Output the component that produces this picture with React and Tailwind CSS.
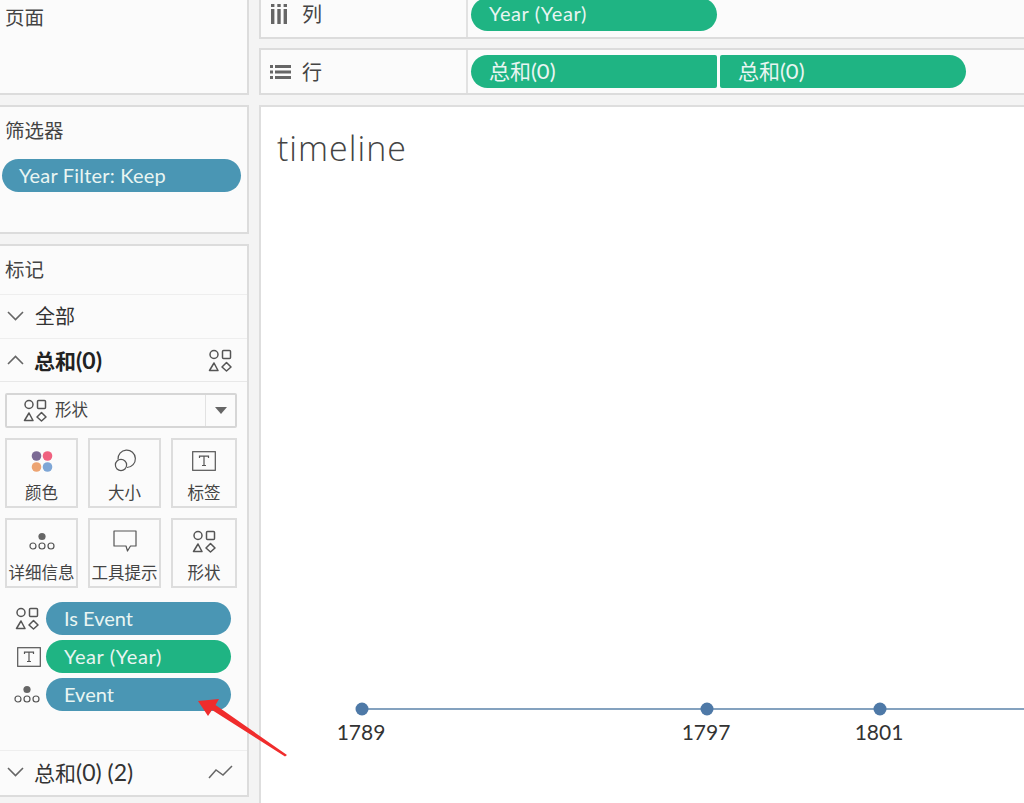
const font = { cjk: "font-['Lato','Noto_Sans_CJK_SC',sans-serif]" }

function ShapesIcon({ className = 'w-[24px] h-[23px]' }) {
  return (
    <svg className={className} viewBox="0 0 24 23" fill="none" stroke="#555" strokeWidth="1.5">
      <circle cx="6" cy="5.5" r="4" />
      <rect x="14.5" y="1.5" width="8" height="8" rx="1" />
      <path d="M6 14 L10 21.5 H1.5 Z" strokeLinejoin="round" />
      <path d="M18.5 13.5 L23 18 L18.5 22 L14 18 Z" strokeLinejoin="round" />
    </svg>
  )
}

function LabelIcon({ className = 'w-[24px] h-[20px]' }) {
  return (
    <svg className={className} viewBox="0 0 24 20" fill="none">
      <rect x="0.7" y="0.7" width="22.6" height="18.6" stroke="#555" strokeWidth="1.2" />
      <path d="M7.5 7 V5.2 H16.5 V7 M12 5.2 V14.5 M10 14.5 H14" stroke="#555" strokeWidth="1.2" />
    </svg>
  )
}

function DetailIcon({ className = 'w-[26px] h-[19px]' }) {
  return (
    <svg className={className} viewBox="0 0 26 19" fill="none">
      <circle cx="13" cy="4.5" r="3.6" fill="#666" />
      <circle cx="4" cy="14" r="3" stroke="#555" strokeWidth="1.2" />
      <circle cx="13" cy="14" r="3" stroke="#555" strokeWidth="1.2" />
      <circle cx="22" cy="14" r="3" stroke="#555" strokeWidth="1.2" />
    </svg>
  )
}

function ColorIcon() {
  return (
    <svg className="w-[22px] h-[21px]" viewBox="0 0 22 21">
      <circle cx="5.5" cy="5" r="4.8" fill="#7b6a94" />
      <circle cx="16.5" cy="5" r="4.8" fill="#f0617f" />
      <circle cx="5.5" cy="16" r="4.8" fill="#eda472" />
      <circle cx="16.5" cy="16" r="4.8" fill="#7ea6d6" />
    </svg>
  )
}

function SizeIcon() {
  return (
    <svg className="w-[24px] h-[24px]" viewBox="0 0 24 24" fill="none" stroke="#555" strokeWidth="1.2">
      <path d="M5 10.5 A8.7 8.7 0 1 1 14 18.5" />
      <circle cx="8" cy="16" r="5.6" />
    </svg>
  )
}

function TooltipIcon() {
  return (
    <svg className="w-[24px] h-[23px]" viewBox="0 0 24 23" fill="none">
      <path d="M1 1 H23 V16 H17.5 L14.5 21 L13 16 H1 Z" stroke="#555" strokeWidth="1.2" strokeLinejoin="round" />
    </svg>
  )
}

function Chevron({ up = false }) {
  return (
    <svg className="w-[17px] h-[10px] mr-[11px]" viewBox="0 0 17 10" fill="none" stroke="#666" strokeWidth="1.6">
      <path d={up ? 'M1 9 L8.5 1.5 L16 9' : 'M1 1 L8.5 8.5 L16 1'} />
    </svg>
  )
}

function Pill({ children, color = 'green', className = '' }) {
  const colors = {
    green: 'bg-[#1fb483]',
    blue: 'bg-[#4a96b4]',
  }
  return (
    <div className={`flex items-center h-[33px] pb-[2px] rounded-[17px] text-[#e9f5f2] text-[20px] leading-none ${colors[color]} ${className}`}>
      {children}
    </div>
  )
}

function Panel({ children, className = '' }) {
  return <div className={`bg-[#fbfbfb] border-2 border-l-0 border-[#dcdcdc] ${className}`}>{children}</div>
}

function MarkButton({ icon, label }) {
  return (
    <div className="flex flex-col items-center bg-[#fbfbfb] border-2 border-[#dddddd] h-[70px] pt-[7px]">
      <div className="h-[28px] flex items-center">{icon}</div>
      <span className="mt-[8px] text-[16.5px] leading-[20px] text-[#444] whitespace-nowrap">{label}</span>
    </div>
  )
}

function ShelfRow({ icon, label, className = '', labelClass = '', children }) {
  return (
    <div className={`flex bg-[#fbfbfb] border-2 border-r-0 border-[#dcdcdc] ${className}`}>
      <div className={`w-[207px] shrink-0 flex items-center border-r-2 border-[#e2e2e2] pl-[9px] text-[#444] text-[20px] ${labelClass}`}>
        <span className="w-[32px] flex">{icon}</span>
        {label}
      </div>
      <div className="flex gap-[3px] pl-[3px] items-center">{children}</div>
    </div>
  )
}

const years = [
  { label: '1789', x: 101 },
  { label: '1797', x: 446 },
  { label: '1801', x: 619 },
]

export default function App() {
  return (
    <div className={`relative flex w-[1024px] h-[803px] overflow-hidden bg-[#f4f4f4] ${font.cjk}`}>
      {/* left column */}
      <div className="w-[249px] shrink-0 flex flex-col">
        <Panel className="h-[95px] border-t-0 pl-[5px] pt-[5px] text-[19.5px] leading-[26px] text-[#444]">页面</Panel>
        <Panel className="h-[129px] mt-[10px] pt-[11px] text-[19.5px] leading-[26px] text-[#444]">
          <div className="pl-[5px]">筛选器</div>
          <Pill color="blue" className="ml-[2px] mt-[15px] w-[239px] pl-[17px] text-[20.4px] tracking-[0.2px]">Year Filter: Keep</Pill>
        </Panel>
        <Panel className="h-[553px] mt-[10px] flex flex-col text-[#444]">
          <div className="h-[49px] pl-[5px] flex items-center text-[19.5px] border-b border-[#eeeeee]">标记</div>
          <div className="h-[44px] pb-[2px] flex items-center pl-[7px] text-[20px] text-[#333] border-b border-[#eeeeee]">
            <Chevron />
            全部
          </div>
          <div className="h-[43px] flex items-center pl-[7px] pr-[15px] text-[21px] font-bold text-[#222] border-b border-[#e8e8e8]">
            <Chevron up />
            <span className="-ml-[1px]">总和<span className="text-[23px]">(0)</span></span>
            <ShapesIcon className="ml-auto w-[24px] h-[23px]" />
          </div>

          <div className="mx-[5px] mt-[11px] h-[35px] w-[232px] flex bg-[#fbfbfb] border-2 border-[#d6d6d6] rounded-[2px]">
            <div className="flex-1 flex items-center pl-[16px] text-[16.5px] gap-[8px]">
              <ShapesIcon />
              形状
            </div>
            <div className="w-[30px] flex items-center justify-center border-l border-[#e2e2e2]">
              <div className="border-x-[6px] border-t-[7px] border-x-transparent border-t-[#666]" />
            </div>
          </div>

          <div className="mx-[5px] mt-[10px] grid grid-cols-[73px_73px_66px] gap-[10px]">
            <MarkButton icon={<ColorIcon />} label="颜色" />
            <MarkButton icon={<SizeIcon />} label="大小" />
            <MarkButton icon={<LabelIcon />} label="标签" />
            <MarkButton icon={<DetailIcon />} label="详细信息" />
            <MarkButton icon={<TooltipIcon />} label="工具提示" />
            <MarkButton icon={<ShapesIcon />} label="形状" />
          </div>

          <div className="mt-[14px] flex flex-col gap-[5px] pl-[15px]">
            <div className="flex items-center">
              <span className="w-[31px] flex"><ShapesIcon /></span>
              <Pill color="blue" className="w-[185px] pl-[18px]">Is Event</Pill>
            </div>
            <div className="flex items-center">
              <span className="w-[31px] pl-[2px] flex"><LabelIcon /></span>
              <Pill className="w-[185px] pl-[18px] tracking-[0.6px]">Year (Year)</Pill>
            </div>
            <div className="flex items-center">
              <span className="w-[31px] -ml-[1px] mr-[1px] flex"><DetailIcon /></span>
              <Pill color="blue" className="w-[185px] pl-[18px]">Event</Pill>
            </div>
          </div>

          <div className="mt-auto h-[45px] pb-[2px] flex items-center pl-[7px] pr-[14px] text-[21px] text-[#333] border-t border-[#eeeeee]">
            <Chevron />
            <span className="-ml-[1px]">总和<span className="text-[23px]">(0) (2)</span></span>
            <svg className="ml-auto w-[25px] h-[16px]" viewBox="0 0 25 16" fill="none" stroke="#666" strokeWidth="1.5">
              <path d="M1 14 L8 6 L15 11 L24 2" />
            </svg>
          </div>
        </Panel>
      </div>

      {/* right column */}
      <div className="flex-1 ml-[10px] flex flex-col">
        <ShelfRow
          label="列"
          className="h-[39px] border-t-0"
          labelClass="pb-[9px]"
          icon={
            <svg className="w-[18px] h-[20px]" viewBox="0 0 18 20" fill="#666">
              <rect x="1" y="0" width="3.4" height="3" />
              <rect x="1" y="5" width="3.4" height="15" />
              <rect x="7.3" y="0" width="3.4" height="3" />
              <rect x="7.3" y="5" width="3.4" height="15" />
              <rect x="13.6" y="0" width="3.4" height="3" />
              <rect x="13.6" y="5" width="3.4" height="15" />
            </svg>
          }
        >
          <Pill className="w-[246px] pl-[18px] -mt-[9px] tracking-[0.6px]">Year (Year)</Pill>
        </ShelfRow>
        <ShelfRow
          label="行"
          className="h-[47px] mt-[9px]"
          icon={
            <svg className="w-[21px] h-[16px]" viewBox="0 0 21 16" fill="#666">
              <rect x="0" y="1" width="3" height="3" />
              <rect x="5" y="1" width="16" height="3" />
              <rect x="0" y="6.5" width="3" height="3" />
              <rect x="5" y="6.5" width="16" height="3" />
              <rect x="0" y="12" width="3" height="3" />
              <rect x="5" y="12" width="16" height="3" />
            </svg>
          }
        >
          <Pill className="w-[246px] pl-[18px] rounded-r-[2px] text-[21px]"><span>总和<span className="text-[22px]">(0)</span></span></Pill>
          <Pill className="w-[246px] pl-[18px] rounded-l-[2px] text-[21px]"><span>总和<span className="text-[22px]">(0)</span></span></Pill>
        </ShelfRow>

        <div className="relative flex-1 mt-[10px] bg-white border-l-2 border-t-2 border-[#dedede]">
          <div className="pl-[16px] pt-[19px] font-['Open_Sans',sans-serif] font-light text-[34px] tracking-[1px] leading-[44px] text-[#444]">timeline</div>

          <svg className="absolute left-0 top-[590px] w-[763px] h-[24px]" viewBox="0 0 763 24">
            <line x1="100" y1="12" x2="763" y2="12" stroke="#5b83aa" strokeWidth="1.5" />
            {years.map((y) => (
              <circle key={y.label} cx={y.x} cy="12" r="6.5" fill="#4e79a7" />
            ))}
          </svg>
          {years.map((y) => (
            <span
              key={y.label}
              className="absolute top-[612px] -translate-x-1/2 text-[21px] leading-[26px] text-[#333]"
              style={{ left: y.x - 1 }}
            >
              {y.label}
            </span>
          ))}
        </div>
      </div>

      {/* red annotation arrow */}
      <svg className="absolute left-[190px] top-[695px] w-[100px] h-[65px]" viewBox="0 0 100 65">
        <path d="M8 6 L29 4 L25.5 10 L97 60 L95 61.5 L22 15 L18 21 Z" fill="#f02c2c" />
      </svg>
    </div>
  )
}
